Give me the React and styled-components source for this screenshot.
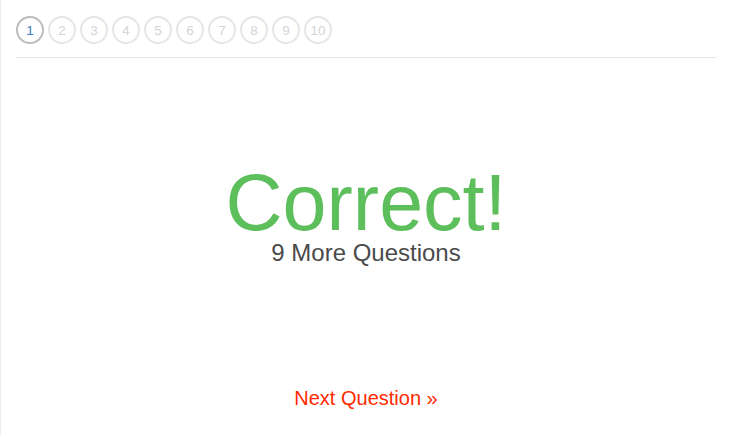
import React from 'react';
import styled, { createGlobalStyle } from 'styled-components';

const GlobalStyle = createGlobalStyle`
  html, body {
    margin: 0;
    padding: 0;
    background: #fff;
    font-family: "Liberation Sans", Arial, Helvetica, sans-serif;
  }
`;

const Page = styled.div`
  box-sizing: border-box;
  height: 435px;
  border-left: 1px solid #ececec;
  padding: 16px 14px 0 15px;
`;

const Steps = styled.div`
  display: flex;
  gap: 4px;
`;

const Step = styled.div`
  box-sizing: border-box;
  width: 28px;
  height: 28px;
  border-radius: 50%;
  border: 2px solid ${p => (p.$active ? '#bdbdbd' : '#e6e6e6')};
  color: ${p => (p.$active ? '#3a7cc2' : '#d4d4d4')};
  font-size: 13.5px;
  display: flex;
  align-items: center;
  justify-content: center;
`;

const Divider = styled.hr`
  margin: 13px 0 0;
  border: 0;
  border-top: 1px solid #e5e5e5;
`;

const Result = styled.div`
  margin-top: 108px;
  text-align: center;
`;

const Title = styled.div`
  font-size: 79px;
  line-height: 74px;
  color: #5cbf5c;
`;

const Remaining = styled.div`
  margin-top: 1px;
  font-size: 24px;
  line-height: 1;
  color: #4a4a4a;
`;

const NextLink = styled.a`
  display: block;
  margin-top: 123px;
  text-align: center;
  font-size: 20px;
  line-height: 1;
  color: #ff2a00;
  text-decoration: none;
  cursor: pointer;
`;

export default function App() {
  const steps = Array.from({ length: 10 }, (_, i) => i + 1);
  return (
    <>
      <GlobalStyle />
      <Page>
        <Steps>
          {steps.map(n => (
            <Step key={n} $active={n === 1}>{n}</Step>
          ))}
        </Steps>
        <Divider />
        <Result>
          <Title>Correct!</Title>
          <Remaining>9 More Questions</Remaining>
        </Result>
        <NextLink>Next Question »</NextLink>
      </Page>
    </>
  );
}
